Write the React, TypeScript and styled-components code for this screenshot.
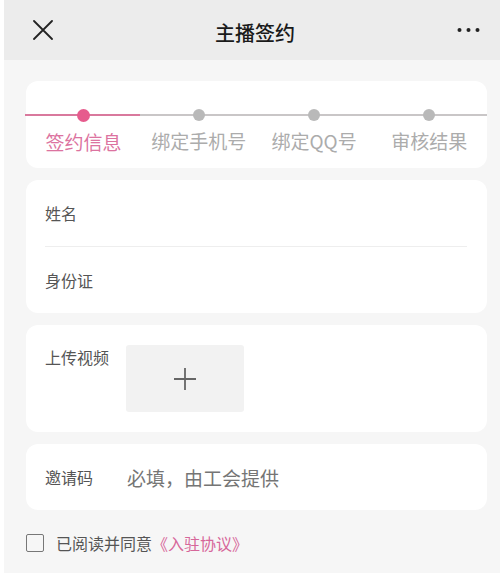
import React, {useState} from 'react';
import styled, {createGlobalStyle} from "styled-components";

const steps = ['签约信息', '绑定手机号', '绑定QQ号', '审核结果'];
const current = 0;

const App = () => {
    const [agreed, setAgreed] = useState<boolean>(false);
    const [code, setCode] = useState<string>("");

    return (
        <>
            <GlobalStyle/>
            <Page>
                <Header>
                    <IconButton aria-label='关闭'>
                        <svg width='20' height='20' viewBox='0 0 20 20'>
                            <path d='M1 1 L19 19 M19 1 L1 19' stroke='#222' strokeWidth='1.8' strokeLinecap='round'/>
                        </svg>
                    </IconButton>
                    <Title>主播签约</Title>
                    <IconButton aria-label='更多'>
                        <svg width='23' height='6' viewBox='0 0 23 6'>
                            <circle cx='2.5' cy='3' r='2' fill='#222'/>
                            <circle cx='11.5' cy='3' r='2' fill='#222'/>
                            <circle cx='20.5' cy='3' r='2' fill='#222'/>
                        </svg>
                    </IconButton>
                </Header>
                <Body>
                    <StepCard>
                        <Progress style={{width: `${(current + 0.5) * 25 + 12.5}%`}}/>
                        {steps.map((s, i) => (
                            <Step key={s}>
                                <Dot active={i <= current}/>
                                <StepLabel active={i <= current}>{s}</StepLabel>
                            </Step>
                        ))}
                    </StepCard>

                    <Card>
                        <Field>
                            <Label>姓名</Label>
                        </Field>
                        <Divider/>
                        <Field>
                            <Label>身份证</Label>
                        </Field>
                    </Card>

                    <UploadCard>
                        <Label>上传视频</Label>
                        <UploadBox aria-label='上传视频'>
                            <svg width='22' height='22' viewBox='0 0 22 22'>
                                <path d='M11 0 V22 M0 11 H22' stroke='#666' strokeWidth='1.8'/>
                            </svg>
                        </UploadBox>
                    </UploadCard>

                    <InviteCard>
                        <Label>邀请码</Label>
                        <CodeInput
                            value={code}
                            onChange={e => setCode(e.target.value)}
                            placeholder='必填，由工会提供'
                        />
                    </InviteCard>

                    <Agree onClick={() => setAgreed(!agreed)}>
                        <Checkbox checked={agreed}/>
                        <span>已阅读并同意<Link>《入驻协议》</Link></span>
                    </Agree>
                </Body>
            </Page>
        </>
    );
};

export default App;

const GlobalStyle = createGlobalStyle`
  body {
    margin: 0;
    background: #fff;
    font-family: "Noto Sans CJK SC", "Noto Sans", sans-serif;
  }
`

const Page = styled.div`
  margin-left: 4px;
  height: 573px;
  background: #f6f6f6;
  display: flex;
  flex-direction: column;
  overflow: hidden;
`

const Header = styled.div`
  height: 60px;
  flex-shrink: 0;
  background: #ececec;
  display: flex;
  align-items: center;
  justify-content: space-between;
  padding: 0 20px 0 29px;
`

const IconButton = styled.button`
  border: none;
  background: transparent;
  padding: 0;
  display: flex;
  align-items: center;
  cursor: pointer;
`

const Title = styled.h1`
  margin: 5px 0 0 0;
  font-size: 20px;
  font-weight: 500;
  color: #1a1a1a;
`

const Body = styled.div`
  padding: 21px 13px 0 22px;
  display: flex;
  flex-direction: column;
  gap: 12px;
`

const Card = styled.div`
  background: #fff;
  border-radius: 12px;
`

const StepCard = styled(Card)`
  position: relative;
  height: 87px;
  display: grid;
  grid-template-columns: repeat(4, 1fr);

  &::before {
    content: '';
    position: absolute;
    left: -1px;
    right: 0;
    top: 33px;
    height: 1.5px;
    background: #c9c6c7;
  }
`

const Progress = styled.div`
  position: absolute;
  left: -1px;
  top: 33px;
  height: 1.5px;
  background: #d9799d;
`

const Step = styled.div`
  position: relative;
  display: flex;
  flex-direction: column;
  align-items: center;
  padding-top: 28px;
`

const Dot = styled.span<{ active: boolean }>`
  width: ${props => props.active ? 13 : 12}px;
  height: ${props => props.active ? 13 : 12}px;
  border-radius: 50%;
  background: ${props => props.active ? '#e65b8d' : '#b9b9b9'};
`

const StepLabel = styled.span<{ active: boolean }>`
  margin-top: 8px;
  font-size: 19px;
  line-height: 24px;
  color: ${props => props.active ? '#dc73a0' : '#acacac'};
  white-space: nowrap;
`

const Field = styled.div`
  height: 66px;
  display: flex;
  align-items: center;
  padding: 0 19px;
`

const Label = styled.span`
  font-size: 16px;
  color: #555;
  white-space: nowrap;
`

const Divider = styled.div`
  height: 1px;
  background: #eee;
  margin: 0 20px 0 19px;
`

const UploadCard = styled(Card)`
  height: 107px;
  display: flex;
  align-items: flex-start;
  gap: 17px;
  padding: 21px 19px 0;
  box-sizing: border-box;

  ${Label} {
    line-height: 22px;
  }
`

const UploadBox = styled.button`
  margin-top: -1px;
  width: 118px;
  height: 67px;
  border: none;
  border-radius: 3px;
  background: #f2f2f2;
  display: flex;
  align-items: center;
  justify-content: center;
  cursor: pointer;
`

const InviteCard = styled(Card)`
  height: 66px;
  display: flex;
  align-items: center;
  gap: 34px;
  padding: 0 19px;
`

const CodeInput = styled.input`
  flex: 1;
  border: none;
  outline: none;
  background: transparent;
  font-family: inherit;
  font-size: 19px;
  color: #333;
  padding: 0;

  ::placeholder {
    color: #b3b3b3;
  }
`

const Agree = styled.label`
  margin-top: 9px;
  display: flex;
  align-items: center;
  gap: 12px;
  font-size: 16px;
  color: #555;
  cursor: pointer;
`

const Checkbox = styled.span<{ checked: boolean }>`
  flex-shrink: 0;
  box-sizing: border-box;
  width: 18px;
  height: 18px;
  border: 1.5px solid #777;
  border-radius: 2px;
  background: ${props => props.checked ? '#e65b8d' : 'transparent'};
`

const Link = styled.span`
  color: #d6679a;
`
